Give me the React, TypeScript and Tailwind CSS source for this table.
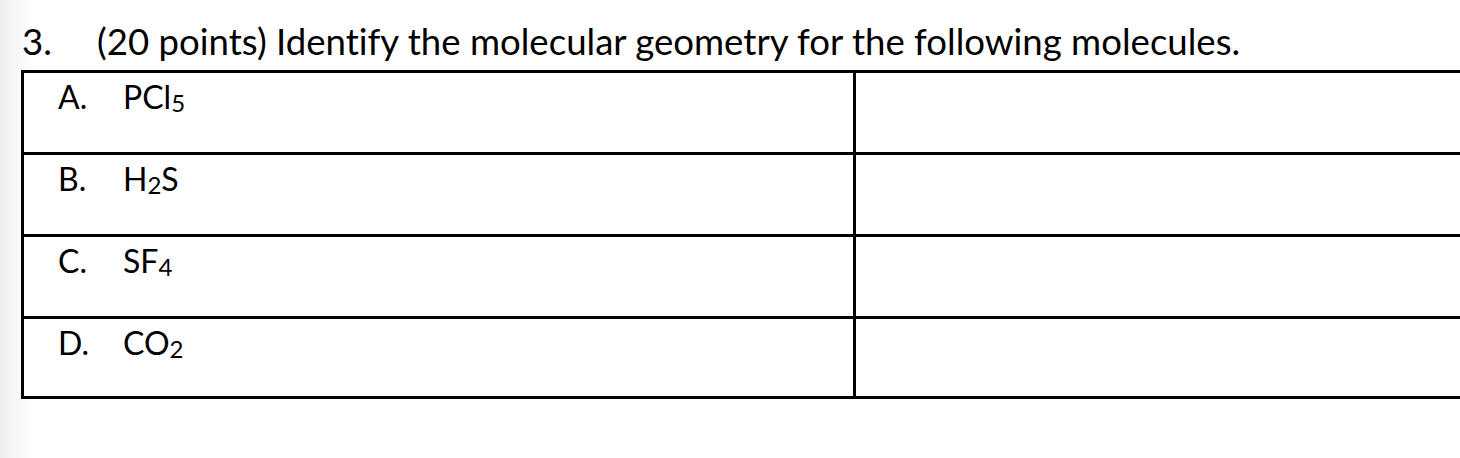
import React from "react";

const rows: { letter: string; main: string[] }[] = [
  { letter: "A.", main: ["PCl", "5", ""] },
  { letter: "B.", main: ["H", "2", "S"] },
  { letter: "C.", main: ["SF", "4", ""] },
  { letter: "D.", main: ["CO", "2", ""] },
];

export default function App() {
  return (
    <div
      className="relative w-[1460px] h-[458px] overflow-hidden bg-[linear-gradient(to_right,#eeeeee_0px,#f8f8f8_18px,#ffffff_34px)] text-black [font-variant-ligatures:none]"
      style={{ fontFamily: "Lato, 'Open Sans', sans-serif" }}
    >
      <div className="h-[70px] pt-[20px] pl-[22px] text-[36.6px] leading-[43px] whitespace-nowrap">
        <span className="inline-block w-[75px]">3.</span>
        <span>(20 points) Identify the molecular geometry for the following molecules.</span>
      </div>
      <div className="ml-[21px] w-[1480px] border-b-[3px] border-black">
        {rows.map((r, i) => (
          <div key={i} className="flex h-[82px] border-t-[3px] border-l-[3px] border-black bg-white last:h-[80px]">
            <div className="w-[829px] pt-[5px] pl-[34px] text-[32px] leading-[38px] whitespace-nowrap">
              <span className="inline-block w-[65px]">{r.letter}</span>
              <span>
                {r.main[0]}
                <span className="text-[24px] relative top-[3px]">{r.main[1]}</span>
                {r.main[2]}
              </span>
            </div>
            <div className="flex-1 border-l-[3px] border-black" />
          </div>
        ))}
      </div>
    </div>
  );
}
